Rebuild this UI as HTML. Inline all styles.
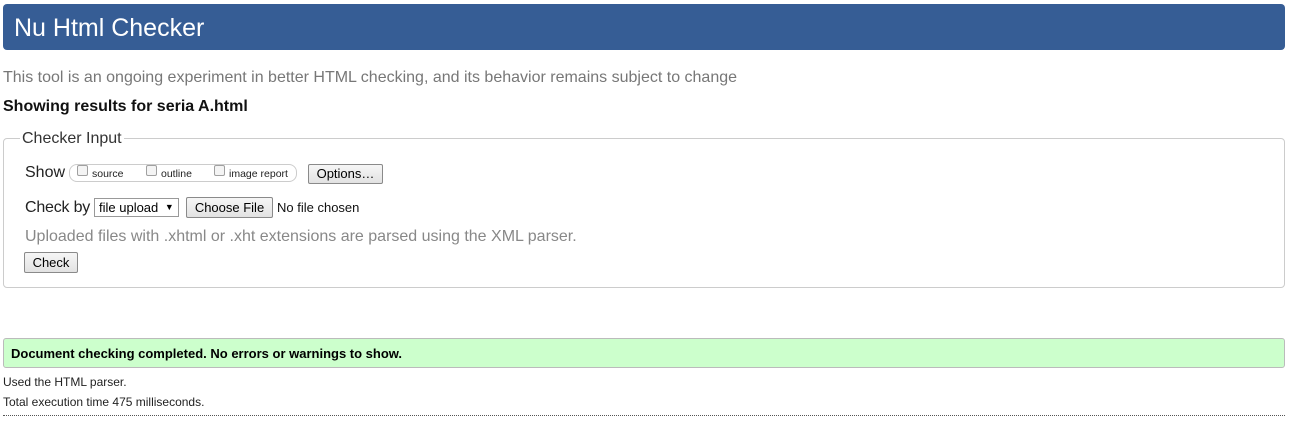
<!DOCTYPE html>
<html><head><style>
body{margin:0;width:1306px;height:423px;background:#fff;font-family:"Liberation Sans",Arial,sans-serif;position:relative;overflow:hidden}
.a{position:absolute;white-space:nowrap}
#hd{left:3px;top:4px;width:1282px;height:46px;background:#365d95;border-radius:4px}
#hd span{position:absolute;left:11px;top:10px;font-size:25px;color:#fff}
.btn{position:absolute;border:1px solid #8a8a8a;background:linear-gradient(#f6f6f6,#e2e2e2);border-radius:2px;font-size:13px;color:#000;text-align:center;box-sizing:border-box}
.cb{position:absolute;width:11px;height:11px;border:1px solid #a0a0a0;border-radius:2px;background:#f4f4f4;box-sizing:border-box}
.sm{font-size:10.5px;color:#222}
</style></head><body>
<div class="a" id="hd"><span>Nu Html Checker</span></div>
<div class="a" style="left:3px;top:69px;font-size:16px;color:#777">This tool is an ongoing experiment in better HTML checking, and its behavior remains subject to change</div>
<div class="a" style="left:3px;top:98px;font-size:16px;font-weight:bold;color:#111">Showing results for seria A.html</div>
<div class="a" style="left:3px;top:138px;width:1282px;height:150px;border:1px solid #ccc;border-radius:4px;box-sizing:border-box"></div>
<div class="a" style="left:20px;top:130px;background:#fff;padding:0 2px;font-size:16px;color:#333">Checker Input</div>
<div class="a" style="left:25px;top:164px;font-size:16px;color:#222">Show</div>
<div class="a" style="left:69px;top:164px;width:228px;height:18px;border:1px solid #ccc;border-radius:8px;box-sizing:border-box"></div>
<div class="cb" style="left:77px;top:165px"></div><div class="a sm" style="left:92px;top:168px">source</div>
<div class="cb" style="left:146px;top:165px"></div><div class="a sm" style="left:161px;top:168px">outline</div>
<div class="cb" style="left:214px;top:165px"></div><div class="a sm" style="left:229px;top:168px">image report</div>
<div class="btn" style="left:308px;top:164px;width:75px;height:20px;line-height:18px">Options…</div>
<div class="a" style="left:25px;top:199px;font-size:16px;color:#222;letter-spacing:-0.2px">Check by</div>
<div class="a" style="left:94px;top:198px;width:85px;height:19px;border:1px solid #999;box-sizing:border-box;font-size:13px;line-height:17px;padding-left:4px">file upload <span style="font-size:9px;position:relative;top:-2px;left:3px">▼</span></div>
<div class="btn" style="left:186px;top:197px;width:87px;height:21px;line-height:19px">Choose File</div>
<div class="a" style="left:277px;top:200px;font-size:13px;color:#111">No file chosen</div>
<div class="a" style="left:25px;top:228px;font-size:16px;color:#888">Uploaded files with .xhtml or .xht extensions are parsed using the XML parser.</div>
<div class="btn" style="left:24px;top:252px;width:54px;height:21px;line-height:19px">Check</div>
<div class="a" style="left:3px;top:338px;width:1282px;height:30px;background:#ccffcc;border:1px solid #bbb;border-radius:3px;box-sizing:border-box"></div>
<div class="a" style="left:11px;top:346px;font-size:13px;font-weight:bold;color:#000">Document checking completed. No errors or warnings to show.</div>
<div class="a" style="left:3px;top:375px;font-size:12px;color:#222">Used the HTML parser.</div>
<div class="a" style="left:3px;top:395px;font-size:12px;color:#222">Total execution time 475 milliseconds.</div>
<div class="a" style="left:3px;top:415px;width:1282px;border-top:1px dotted #555"></div>
</body></html>
